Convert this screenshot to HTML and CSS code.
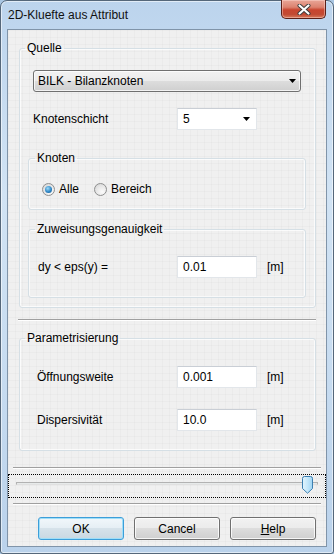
FILE: index.html
```html
<!doctype html>
<html>
<head>
  <meta charset="utf-8">
  <title>2D-Kluefte aus Attribut</title>
  <link rel="stylesheet" href="styles.css">
</head>
<body>
  <div class="window">
    <div class="titlebar">
      <span class="title">2D-Kluefte aus Attribut</span>
      <div class="close">
        <svg width="14" height="11" viewBox="0 0 14 11">
          <path d="M2.5 1.5 L11.5 9.5 M11.5 1.5 L2.5 9.5" stroke="#3a3a3a" stroke-width="4" stroke-linecap="round"/>
          <path d="M2.5 1.5 L11.5 9.5 M11.5 1.5 L2.5 9.5" stroke="#fff" stroke-width="2.2" stroke-linecap="round"/>
        </svg>
      </div>
    </div>

    <div class="client">
      <fieldset class="group group-source">
        <legend>Quelle</legend>
        <div class="source-body">
          <div class="dropdown">
            <span>BILK - Bilanzknoten</span>
            <svg class="arrow" width="7" height="4" viewBox="0 0 7 4"><polygon points="0,0 7,0 3.5,4" fill="#000"/></svg>
          </div>
          <div class="row row-source">
            <span class="label">Knotenschicht</span>
            <div class="combo">
              <span>5</span>
              <svg class="arrow" width="7" height="4" viewBox="0 0 7 4"><polygon points="0,0 7,0 3.5,4" fill="#000"/></svg>
            </div>
          </div>

          <fieldset class="group group-nodes">
            <legend>Knoten</legend>
            <div class="nodes-body">
              <span class="radio-item"><span class="radio checked"></span>Alle</span>
              <span class="radio-item"><span class="radio"></span>Bereich</span>
            </div>
          </fieldset>

          <fieldset class="group group-accuracy">
            <legend>Zuweisungsgenauigkeit</legend>
            <div class="accuracy-body">
              <div class="row row-accuracy">
                <span class="label">dy &lt; eps(y) =</span>
                <div class="field">0.01</div>
                <span class="unit">[m]</span>
              </div>
            </div>
          </fieldset>
        </div>
      </fieldset>

      <div class="separator separator-top"></div>

      <fieldset class="group group-params">
        <legend>Parametrisierung</legend>
        <div class="params-body">
          <div class="row row-params">
            <span class="label">Öffnungsweite</span>
            <div class="field">0.001</div>
            <span class="unit">[m]</span>
          </div>
          <div class="row row-params">
            <span class="label">Dispersivität</span>
            <div class="field">10.0</div>
            <span class="unit">[m]</span>
          </div>
        </div>
      </fieldset>

      <div class="separator separator-wide"></div>

      <div class="slider">
        <div class="track"></div>
        <svg class="thumb" width="11" height="18" viewBox="0 0 11 18">
          <defs>
            <linearGradient id="thumbFill" x1="0" y1="0" x2="1" y2="0">
              <stop offset="0" stop-color="#e3f4fc"/>
              <stop offset="0.5" stop-color="#c4e7fa"/>
              <stop offset="1" stop-color="#9fd4f3"/>
            </linearGradient>
          </defs>
          <path d="M0.5 2.5 Q0.5 0.5 2.5 0.5 H8.5 Q10.5 0.5 10.5 2.5 V12.5 L5.5 17.2 L0.5 12.5 Z" fill="url(#thumbFill)" stroke="#3c7fb1"/>
        </svg>
      </div>

      <div class="separator separator-wide"></div>

      <div class="buttons">
        <div class="btn btn-default">OK</div>
        <div class="btn">Cancel</div>
        <div class="btn"><span><u>H</u>elp</span></div>
      </div>
    </div>
  </div>
</body>
</html>
```

FILE: styles.css
```css
* {
  box-sizing: border-box;
}

html, body {
  margin: 0;
  padding: 0;
}

body {
  width: 334px;
  height: 554px;
  font-family: "Liberation Sans", Arial, sans-serif;
  font-size: 12px;
  color: #000;
  background: #a9c6e3;
}

.window {
  width: 334px;
  height: 554px;
  border: 1px solid #55677a;
  border-radius: 7px 7px 3px 3px;
  padding: 0 6px 6px;
  background: linear-gradient(180deg, #bcd4ed 0%, #d1e3f4 35%, #c6dbf0 70%, #bad2eb 100%);
  box-shadow: inset 0 0 0 1px rgba(255, 255, 255, 0.55);
}

.titlebar {
  height: 28px;
  display: flex;
  justify-content: space-between;
  align-items: flex-start;
}

.title {
  padding: 7px 0 0 1px;
  line-height: 14px;
  color: #111;
}

.close {
  width: 45px;
  height: 19px;
  margin: -1px 1px 0 0;
  border: 1px solid #5b2018;
  border-top: none;
  border-radius: 0 0 5px 5px;
  background: linear-gradient(180deg, #e9a698 0%, #dc826f 40%, #c8452f 55%, #c24a33 80%, #d77a5c 100%);
  box-shadow: inset 0 0 0 1px rgba(255, 220, 210, 0.45);
  display: flex;
  align-items: center;
  justify-content: center;
}

.client {
  height: 518px;
  border: 1px solid #8094a9;
  background-color: #f0f0f0;
  background-image:
    linear-gradient(rgba(0, 0, 0, 0.02) 1px, transparent 1px),
    linear-gradient(90deg, rgba(0, 0, 0, 0.02) 1px, transparent 1px);
  background-size: 7px 7px;
  display: flex;
  flex-direction: column;
}

/* group boxes */
.group {
  margin: 0;
  padding: 0;
  min-width: 0;
  border: 1px solid #d5dfe5;
  border-radius: 3px;
  box-shadow: inset 0 0 0 1px rgba(255, 255, 255, 0.7);
}

.group legend {
  padding: 0 2px;
  line-height: 14px;
  margin-left: 5px;
}

.group-source {
  width: 297px;
  margin: 11px 0 0 11px;
}

.group-source legend {
  margin-left: 5px;
}

.source-body {
  padding: 15px 9px 9px 8px;
}

.group-nodes {
  margin-top: 21px;
}

.group-nodes legend,
.group-accuracy legend {
  margin-left: 6px;
}

.nodes-body {
  padding: 17px 0 13px 13px;
  display: flex;
  line-height: 14px;
}

.group-accuracy {
  margin-top: 12px;
}

.accuracy-body {
  padding: 20px 0 19px 9px;
}

.group-params {
  width: 297px;
  margin: 10px 0 0 11px;
}

.params-body {
  padding: 21px 0 19px 17px;
  display: flex;
  flex-direction: column;
  gap: 21px;
}

/* controls */
.row {
  display: flex;
  align-items: center;
  height: 22px;
}

.row-source {
  margin: 16px 0 0 5px;
}

.row-source .label {
  width: 144px;
}

.row-accuracy .label {
  width: 139px;
}

.row-params .label {
  width: 140px;
}

.dropdown {
  width: 268px;
  height: 22px;
  margin-left: 5px;
  padding: 0 4px 0 4px;
  border: 1px solid #707070;
  border-radius: 3px;
  background: linear-gradient(180deg, #f2f2f2 0%, #ebebeb 50%, #dddddd 50%, #cfcfcf 100%);
  box-shadow: inset 0 0 0 1px rgba(255, 255, 255, 0.75);
  display: flex;
  align-items: center;
  justify-content: space-between;
}

.combo {
  width: 80px;
  height: 22px;
  padding: 0 6px 0 5px;
  border: 1px solid #e2e6ea;
  border-top-color: #c9ced5;
  background: #fff;
  display: flex;
  align-items: center;
  justify-content: space-between;
}

.field {
  width: 80px;
  height: 22px;
  padding: 0 5px;
  border: 1px solid #e2e6ea;
  border-top-color: #c9ced5;
  background: #fff;
  display: flex;
  align-items: center;
}

.unit {
  margin-left: 10px;
}

.radio-item {
  display: flex;
  align-items: center;
  margin-right: 15px;
}

.radio {
  width: 13px;
  height: 13px;
  margin-right: 4px;
  border-radius: 50%;
  border: 1px solid #8e8f8f;
  background: radial-gradient(circle at 65% 70%, #fbfbfb 0%, #e6e6e6 55%, #cfcfcf 100%);
  display: flex;
  align-items: center;
  justify-content: center;
}

.radio.checked::after {
  content: "";
  width: 7px;
  height: 7px;
  border-radius: 50%;
  background: radial-gradient(circle at 40% 35%, #9edbf8 0%, #2f87c6 55%, #0e4f84 100%);
}

/* separators */
.separator {
  height: 2px;
  border-top: 1px solid #a0a0a0;
  border-bottom: 1px solid #fff;
}

.separator-top {
  margin: 11px 10px 0 10px;
}

.separator-wide {
  margin: 16px 5px 0 5px;
}

/* trackbar */
.slider {
  position: relative;
  height: 24px;
  margin-top: 5px;
  border: 1px dotted #000;
  padding: 7px 7px 0 7px;
}

.slider + .separator {
  margin-top: 5px;
}

.track {
  height: 3px;
  border: 1px solid #b2b2b2;
  border-bottom-color: #e0e0e0;
  background: #e7eaea;
}

.thumb {
  position: absolute;
  left: 293px;
  top: 1px;
}

/* buttons */
.buttons {
  margin: 12px 0 0 30px;
  display: flex;
  gap: 10px;
}

.btn {
  width: 86px;
  height: 23px;
  border: 1px solid #707070;
  border-radius: 3px;
  background: linear-gradient(180deg, #f2f2f2 0%, #ebebeb 50%, #dddddd 50%, #cfcfcf 100%);
  box-shadow: inset 0 0 0 1px rgba(255, 255, 255, 0.8);
  display: flex;
  align-items: center;
  justify-content: center;
}

.btn-default {
  border-color: #3c9ed9;
  background: linear-gradient(180deg, #f1f7fb 0%, #e5eef4 50%, #d6e2ea 50%, #c9d8e2 100%);
  box-shadow: inset 0 0 0 1px #9fdef8;
}
```
